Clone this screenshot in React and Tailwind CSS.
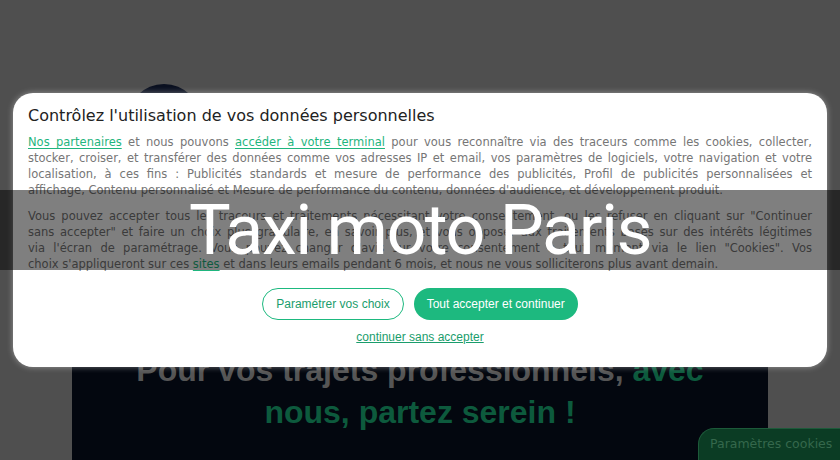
const mont = { fontFamily: '"DejaVu Sans", "Open Sans", sans-serif' };

const Lk = ({ children }) => (
  <a href="#" className="text-[#1fb57e] underline underline-offset-2">
    {children}
  </a>
);

// each line justified on its own so the breaks match the picture
const Line = ({ children, last }) => (
  <div className={last ? 'text-left' : 'text-justify [text-align-last:justify]'}>{children}</div>
);

const CookieModal = () => (
  <div className="absolute left-[13px] top-[93px] w-[814px] h-[274px] rounded-[20px] bg-white px-[15px] pt-[11px] shadow-[0_0_6px_rgba(255,255,255,0.4)]">
    <h2 className="text-[16px] leading-[24px] font-medium text-[#222]" style={mont}>
      Contrôlez l'utilisation de vos données personnelles
    </h2>
    <div className="mt-[6px] text-[11.5px] leading-[16px] text-[#767676]" style={mont}>
      <Line>
        <Lk>Nos partenaires</Lk> et nous pouvons <Lk>accéder à votre terminal</Lk> pour vous reconnaître via des traceurs comme les cookies, collecter,
      </Line>
      <Line>stocker, croiser, et transférer des données comme vos adresses IP et email, vos paramètres de logiciels, votre navigation et votre</Line>
      <Line>localisation, à ces fins : Publicités standards et mesure de performance des publicités, Profil de publicités personnalisées et</Line>
      <Line last>affichage, Contenu personnalisé et Mesure de performance du contenu, données d'audience, et développement produit.</Line>
    </div>
    <div className="mt-[10px] text-[11.5px] leading-[16px] text-[#767676]" style={mont}>
      <Line>Vous pouvez accepter tous les traceurs et traitements nécessitant votre consentement, ou les refuser en cliquant sur "Continuer</Line>
      <Line>sans accepter" et faire un choix plus granulaire, en savoir plus, et vous opposer aux traitements basés sur des intérêts légitimes</Line>
      <Line>via l'écran de paramétrage. Vous pouvez changer d'avis sur votre consentement à tout moment via le lien "Cookies". Vos</Line>
      <Line last>
        choix s'appliqueront sur ces <Lk>sites</Lk> et dans leurs emails pendant 6 mois, et nous ne vous solliciterons plus avant demain.
      </Line>
    </div>
    <div className="mt-[16px] flex justify-center gap-[10px] font-['Liberation_Sans',Arial,sans-serif] text-[12px]">
      <button className="h-[32px] px-[13px] rounded-full border border-[#1db97f] text-[#1a9d6c] bg-white">
        Paramétrer vos choix
      </button>
      <button className="h-[32px] px-[13px] rounded-full bg-[#1db97f] text-white">
        Tout accepter et continuer
      </button>
    </div>
    <div className="mt-[9px] text-center leading-[16px] font-['Liberation_Sans',Arial,sans-serif] text-[12px]">
      <a href="#" className="text-[#1a9d6c] underline">continuer sans accepter</a>
    </div>
  </div>
);

export default function App() {
  return (
    <div className="relative h-[460px] w-[840px] overflow-hidden bg-[#4f4f4f]">
      {/* page behind the overlay */}
      <div className="flex flex-col pt-[84px]">
        <div className="ml-[127px] h-[74px] w-[74px] rounded-full bg-[#0a1020]" />
        <div className="mx-[72px] mt-[172px] h-[200px] bg-[#03070f] pt-[19px] text-center font-['Liberation_Sans',Arial,sans-serif] text-[32px] font-bold leading-[42px]">
          <span className="text-[#555555]">Pour vos trajets professionnels, </span>
          <span className="text-[#0d5a3d]">
            avec
            <br />
            nous, partez serein !
          </span>
        </div>
      </div>

      <CookieModal />

      <div className="absolute left-0 right-0 top-[190px] flex h-[80px] items-center justify-center bg-black/50">
        <h1 className="font-['Roboto',sans-serif] text-[70px] font-normal leading-none tracking-[-1.5px] text-white">
          Taxi moto Paris
        </h1>
      </div>

      <div className="absolute bottom-0 right-0 flex h-[32px] w-[142px] items-center rounded-tl-[16px] border-l border-t border-[#1d5a3a] bg-[#0b3c24] pl-[11px] text-[12.5px] text-[#35684c]" style={mont}>
        Paramètres cookies
      </div>
    </div>
  );
}
